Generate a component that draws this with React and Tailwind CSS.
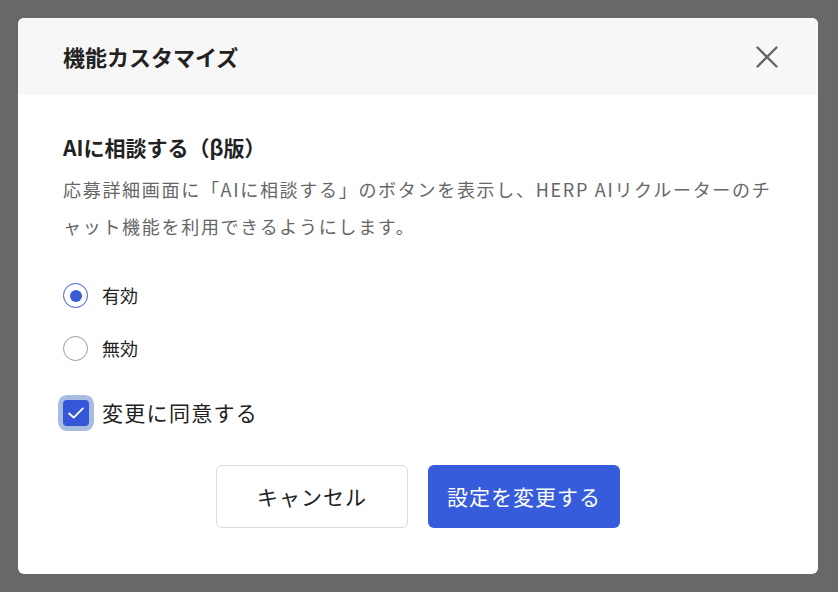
const font = { fontFamily: '"Noto Sans CJK JP", "Noto Sans", sans-serif' };

function Radio({ checked, label }) {
  return (
    <label className="flex items-center gap-[14px] h-[25px]">
      <span
        className={
          "w-[25px] h-[25px] rounded-full border flex items-center justify-center bg-white " +
          (checked ? "border-[#3a5bd9]" : "border-[#9a9a9a]")
        }
      >
        {checked && <span className="w-[12px] h-[12px] rounded-full bg-[#3a5bd9]" />}
      </span>
      <span className="text-[18px] text-[#222]">{label}</span>
    </label>
  );
}

export default function App() {
  return (
    <div className="w-[838px] h-[592px] bg-[#686868] pt-[18px] pl-[18px]" style={font}>
      <div className="w-[800px] h-[556px] bg-white rounded-[6px] overflow-hidden flex flex-col">
        <div className="h-[77px] bg-[#f7f7f7] flex items-center justify-between pl-[45px] pr-[40px]">
          <h2 className="text-[22px] font-bold text-[#222]">機能カスタマイズ</h2>
          <svg viewBox="0 0 22 22" className="w-[22px] h-[22px]" fill="none" stroke="#666" strokeWidth="2.4" strokeLinecap="round">
            <path d="M1.5 1.5l19 19M20.5 1.5l-19 19" />
          </svg>
        </div>
        <div className="px-[45px] pt-[38px] flex flex-col">
          <h3 className="text-[21px] font-bold text-[#222] leading-[28px]">AIに相談する（β版）</h3>
          <p className="mt-[10px] text-[18px] leading-[37px] tracking-[1.7px] text-[#666]">
            応募詳細画面に「AIに相談する」のボタンを表示し、HERP AIリクルーターのチ
            <br />
            ャット機能を利用できるようにします。
          </p>
          <div className="mt-[38px] flex flex-col gap-[28px]">
            <Radio checked label="有効" />
            <Radio label="無効" />
          </div>
          <label className="mt-[39px] flex items-center gap-[13px] h-[26px]">
            <span className="w-[26px] h-[26px] rounded-[4px] bg-[#3556d6] ring-[5px] ring-[#a9bde0] flex items-center justify-center">
              <svg viewBox="0 0 24 24" className="w-[22px] h-[22px]" fill="none" stroke="white" strokeWidth="2" strokeLinecap="round" strokeLinejoin="round">
                <path d="M4.5 12.5l5 4.5L19.5 7" />
              </svg>
            </span>
            <span className="text-[21px] tracking-[1.3px] text-[#222]">変更に同意する</span>
          </label>
          <div className="mt-[39px] flex justify-center gap-[20px]">
            <button className="w-[192px] h-[63px] rounded-[6px] border border-[#dcdcdc] bg-white text-[21px] tracking-[1px] text-[#222]">
              キャンセル
            </button>
            <button className="w-[192px] h-[63px] rounded-[6px] bg-[#365bdb] text-[21px] tracking-[1px] text-white">
              設定を変更する
            </button>
          </div>
        </div>
      </div>
    </div>
  );
}
